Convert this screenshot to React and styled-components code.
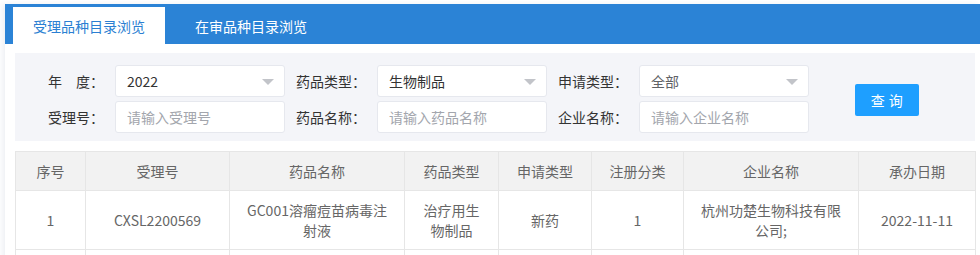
import React from 'react';
import styled, { createGlobalStyle } from 'styled-components';

const GlobalStyle = createGlobalStyle`
  html, body {
    margin: 0;
    padding: 0;
    background: #ffffff;
    font-family: "Noto Sans CJK SC", "Noto Sans", sans-serif;
    font-size: 14px;
  }
  * {
    box-sizing: border-box;
  }
`;

const Page = styled.div`
  padding: 4px 0 0 5px;
  width: 980px;
`;

const Card = styled.div`
  background: #fff;
  box-shadow: -3px 0 5px rgba(30, 60, 110, 0.07);
`;

const TabBar = styled.div`
  display: flex;
  align-items: flex-end;
  height: 40px;
  padding-left: 8px;
  background: #2b83d6;
`;

const Tab = styled.div`
  width: 152px;
  height: 37px;
  margin-right: 10px;
  display: flex;
  align-items: center;
  justify-content: center;
  font-size: 14px;
  color: ${(p) => (p.$active ? '#2b7fd2' : '#ffffff')};
  background: ${(p) => (p.$active ? '#ffffff' : 'transparent')};
  cursor: pointer;
`;

const Body = styled.div`
  padding: 9px 5px 0 10px;
`;

const FilterPanel = styled.div`
  background: #f4f5f9;
  padding: 12px 0 8px 19px;
  display: grid;
  grid-template-columns: 70px 170px 70px 170px 70px 170px auto;
  grid-auto-rows: 32px;
  column-gap: 11px;
  row-gap: 4px;
  align-items: center;
`;

const Label = styled.label`
  text-align: right;
  color: #333;
  font-size: 14px;
  white-space: nowrap;
`;

const Field = styled.div`
  position: relative;
  height: 32px;
  background: #fff;
  border: 1px solid #e6e8ee;
  border-radius: 3px;
  display: flex;
  align-items: center;
  padding: 0 ${(p) => (p.$select ? '30px' : '11px')} 0 11px;
  font-size: 14px;
  color: ${(p) => p.$color || '#333'};
`;

const Input = styled.input`
  width: 100%;
  border: none;
  outline: none;
  background: transparent;
  font: inherit;
  color: #333;
  padding: 0;
  &::placeholder {
    color: #a3a6ad;
  }
`;

const Caret = styled.span`
  position: absolute;
  right: 10px;
  top: 13px;
  width: 0;
  height: 0;
  border-left: 6px solid transparent;
  border-right: 6px solid transparent;
  border-top: 6px solid #c2c4c9;
`;

const ButtonCell = styled.div`
  grid-column: 7;
  grid-row: 1 / span 2;
  align-self: center;
  padding-left: 35px;
  padding-top: 2px;
`;

const SearchButton = styled.button`
  width: 64px;
  height: 32px;
  border: none;
  border-radius: 2px;
  background: #1e9fff;
  color: #fff;
  font: inherit;
  font-size: 14px;
  letter-spacing: 0.5px;
  cursor: pointer;
`;

const Table = styled.table`
  margin-top: 10px;
  width: 960px;
  border-collapse: collapse;
  table-layout: fixed;
  color: #666;
  font-size: 14px;
`;

const Th = styled.th`
  background: #f2f2f2;
  font-weight: normal;
  border: 1px solid #e6e6e6;
  padding: 9px 15px;
  line-height: 20px;
  text-align: center;
`;

const Td = styled.td`
  border: 1px solid #e6e6e6;
  padding: 9px 15px;
  line-height: 20px;
  text-align: center;
  word-break: break-all;
`;

const columns = [
  { title: '序号', width: 70 },
  { title: '受理号', width: 144 },
  { title: '药品名称', width: 175 },
  { title: '药品类型', width: 94 },
  { title: '申请类型', width: 93 },
  { title: '注册分类', width: 92 },
  { title: '企业名称', width: 175 },
  { title: '承办日期', width: 117 },
];

const rows = [
  ['1', 'CXSL2200569', 'GC001溶瘤痘苗病毒注射液', '治疗用生物制品', '新药', '1', '杭州功楚生物科技有限公司;', '2022-11-11'],
  ['', '', '', '', '', '', '', ''],
];

function Select({ value, color }) {
  return (
    <Field $select $color={color}>
      {value}
      <Caret />
    </Field>
  );
}

function TextField({ placeholder }) {
  return (
    <Field>
      <Input placeholder={placeholder} />
    </Field>
  );
}

export default function App() {
  return (
    <Page>
      <GlobalStyle />
      <Card>
        <TabBar>
          <Tab $active>受理品种目录浏览</Tab>
          <Tab>在审品种目录浏览</Tab>
        </TabBar>
        <Body>
          <FilterPanel>
            <Label>年　度：</Label>
            <Select value="2022" />
            <Label>药品类型：</Label>
            <Select value="生物制品" />
            <Label>申请类型：</Label>
            <Select value="全部" color="#606266" />
            <ButtonCell>
              <SearchButton>查 询</SearchButton>
            </ButtonCell>
            <Label>受理号：</Label>
            <TextField placeholder="请输入受理号" />
            <Label>药品名称：</Label>
            <TextField placeholder="请输入药品名称" />
            <Label>企业名称：</Label>
            <TextField placeholder="请输入企业名称" />
          </FilterPanel>
          <Table>
            <colgroup>
              {columns.map((c) => (
                <col key={c.title} style={{ width: c.width }} />
              ))}
            </colgroup>
            <thead>
              <tr>
                {columns.map((c) => (
                  <Th key={c.title}>{c.title}</Th>
                ))}
              </tr>
            </thead>
            <tbody>
              {rows.map((r, ri) => (
                <tr key={ri}>
                  {r.map((cell, i) => (
                    <Td key={i}>{cell || '\u00a0'}</Td>
                  ))}
                </tr>
              ))}
            </tbody>
          </Table>
        </Body>
      </Card>
    </Page>
  );
}
